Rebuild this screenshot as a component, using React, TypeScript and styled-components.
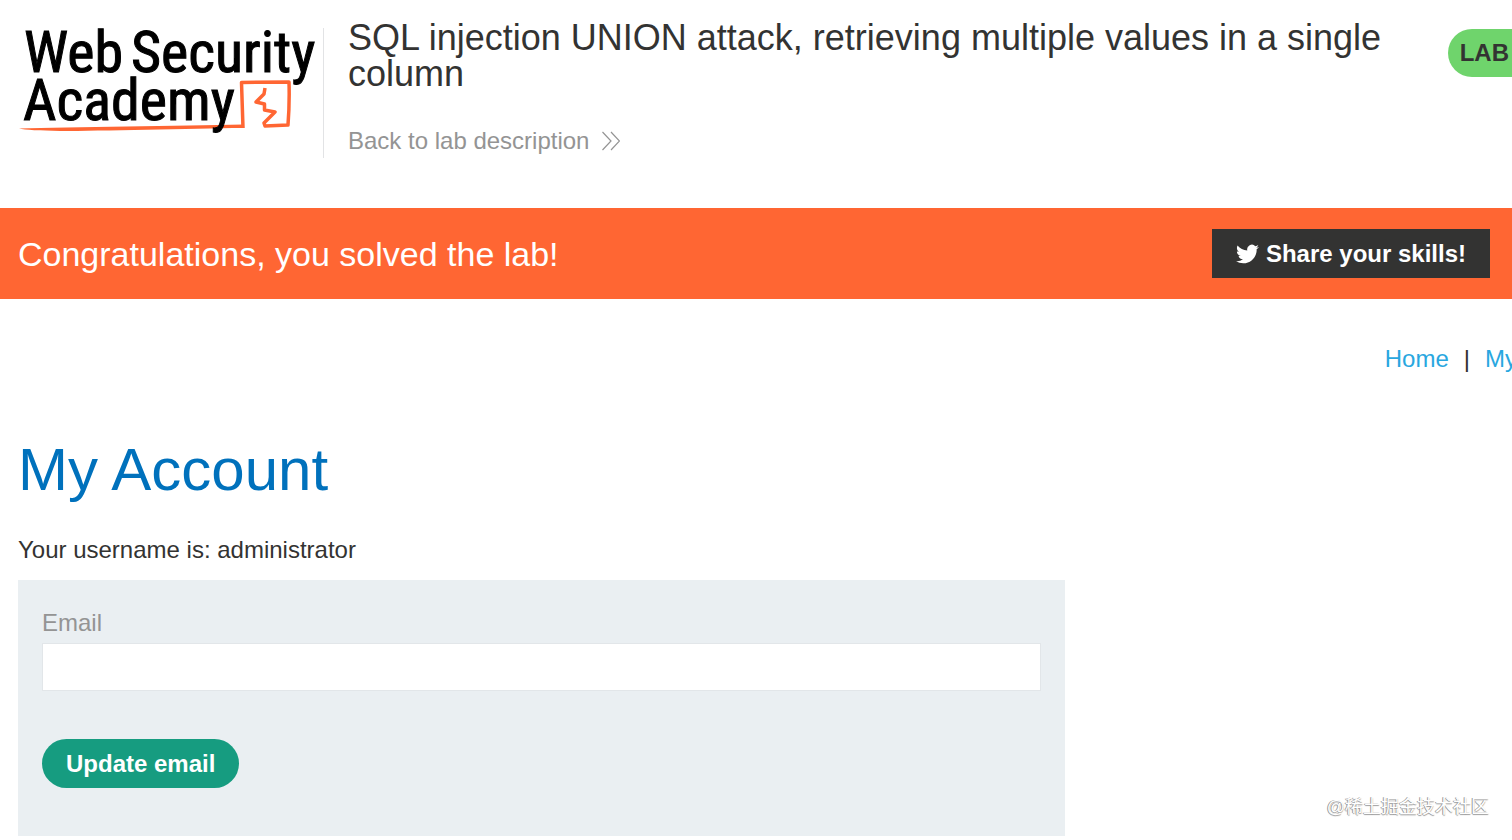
import React from "react";
import styled, { createGlobalStyle } from "styled-components";

const GlobalStyle = createGlobalStyle`
  *, *::before, *::after { box-sizing: border-box; }
  body {
    margin: 0;
    overflow-x: hidden;
    background: #fff;
    color: #333332;
    font-family: "Liberation Sans", Arial, sans-serif;
    font-size: 24px;
    line-height: 28px;
  }
  h1, h2, p { margin: 0; font-weight: 400; }
  a { text-decoration: none; }
`;

const Header = styled.header`
  display: flex;
  align-items: flex-start;
  padding: 20px 0 50px 18px;
`;

const LogoLink = styled.a`
  flex: none;
  display: block;
  height: 130px;
  margin-top: 8px;
  border-right: 1px solid #e2e3e5;
`;

const LogoSvg = styled.svg`
  display: block;
  overflow: visible;
`;

const LogoText = styled.text`
  font-family: "Roboto Condensed", "Liberation Sans Narrow", Roboto, sans-serif;
  font-size: 58px;
  font-weight: 400;
  fill: #000;
  stroke: #000;
  stroke-width: 1px;
`;

const TitleBlock = styled.div`
  flex: 1;
  min-width: 0;
  padding: 0 56px 0 24px;
`;

const Title = styled.h2`
  font-size: 36px;
  line-height: 36px;
`;

const BackLink = styled.a`
  display: inline-flex;
  align-items: center;
  gap: 13px;
  margin-top: 35px;
  color: #949494;
`;

const Status = styled.p`
  flex: none;
  margin-top: 9px;
  padding: 0 3px 0 12px;
  border-radius: 24px 0 0 24px;
  background: #6fd46c;
  font-weight: 700;
  line-height: 48px;
`;

const Banner = styled.section`
  display: flex;
  align-items: center;
  justify-content: space-between;
  padding: 21px 22px 21px 18px;
  background: #ff6633;
  color: #fff;
`;

const BannerText = styled.p`
  font-size: 34px;
  line-height: 40px;
`;

const ShareButton = styled.button`
  display: flex;
  align-items: center;
  gap: 7px;
  height: 49px;
  padding: 0 24px;
  border: 0;
  background: #333332;
  color: #fff;
  font: inherit;
  font-weight: 700;
`;

const Nav = styled.nav`
  display: flex;
  justify-content: flex-end;
  gap: 15px;
  margin: 46px -5px 0 0;
`;

const NavLink = styled.a`
  color: #29a7df;
`;

const Main = styled.main`
  padding: 0 18px;
`;

const PageTitle = styled.h1`
  margin-top: 63px;
  color: #0071bc;
  font-size: 60px;
  line-height: 68px;
`;

const Username = styled.p`
  margin-top: 32px;
`;

const Form = styled.form`
  display: flex;
  flex-direction: column;
  align-items: flex-start;
  max-width: 1047px;
  margin-top: 16px;
  padding: 29px 24px 48px;
  background: #eaeff2;
`;

const Label = styled.label`
  color: #949494;
`;

const Input = styled.input`
  width: 100%;
  height: 48px;
  margin-top: 6px;
  padding: 0 12px;
  border: 1px solid #e2e6e9;
  background: #fff;
  font: inherit;
`;

const SubmitButton = styled.button`
  height: 49px;
  margin-top: 48px;
  padding: 0 24px;
  border: 0;
  border-radius: 25px;
  background: #169c80;
  color: #fff;
  font: inherit;
  font-weight: 700;
`;

const Watermark = styled.p`
  position: absolute;
  right: 23px;
  top: 795px;
  color: #fff;
  font-family: "Liberation Sans", "Noto Sans CJK SC", sans-serif;
  font-size: 18px;
  line-height: 24px;
  text-shadow: -1px 0 0 #999, 0 1px 1px #999;
`;

function Logo() {
  return (
    <LogoSvg width="305" height="110" viewBox="18 28 305 110" role="img" aria-label="Web Security Academy">
      <path fill="#ff6633" d="M19 128.500C70 127 180 126 243 124.500L243 128C190 128.500 100 131 60 131C40 130.500 25 130 19 128.500Z" />
      <path
        fill="none"
        stroke="#ff6633"
        strokeWidth="3.500"
        strokeLinejoin="round"
        d="M243 128L241.500 82.500L289 82C289.500 98 289 112 288 125L265 126L264 123L275 112L264.500 110L264.500 104L256 102L264 94L265 88"
      />
      <LogoText x="24" y="72">Web</LogoText>
      <LogoText x="131" y="72">Security</LogoText>
      <LogoText x="23" y="120">Academy</LogoText>
    </LogoSvg>
  );
}

export default function App() {
  return (
    <>
      <GlobalStyle />
      <Header>
        <LogoLink href="#academy"><Logo /></LogoLink>
        <TitleBlock>
          <Title>SQL injection UNION attack, retrieving multiple values in a single column</Title>
          <BackLink href="#description">
            Back to lab description
            <svg width="18" height="20" viewBox="0 0 18 20" fill="none" stroke="#949494" strokeWidth="1.200" aria-hidden="true">
              <path d="M0.500 1L9 10L0.500 19M9 1L17.500 10L9 19" />
            </svg>
          </BackLink>
        </TitleBlock>
        <Status>LAB</Status>
      </Header>
      <Banner>
        <BannerText>Congratulations, you solved the lab!</BannerText>
        <ShareButton type="button">
          <svg width="23" height="24" viewBox="0 0 24 24" fill="#fff" aria-hidden="true">
            <path d="M23.950 4.570a10 10 0 0 1-2.820.770 4.960 4.960 0 0 0 2.160-2.720c-.950.550-2 .950-3.130 1.180a4.920 4.920 0 0 0-8.380 4.480C7.690 8.090 4.070 6.130 1.640 3.160a4.820 4.820 0 0 0-.670 2.480c0 1.710.870 3.210 2.190 4.100a4.900 4.900 0 0 1-2.230-.620v.060a4.920 4.920 0 0 0 3.950 4.830 5 5 0 0 1-2.210.080 4.940 4.940 0 0 0 4.600 3.420A9.870 9.870 0 0 1 0 19.540a13.990 13.990 0 0 0 7.550 2.210c9.050 0 14-7.500 14-13.980 0-.210 0-.420-.020-.630a9.940 9.940 0 0 0 2.420-2.570z" />
          </svg>
          Share your skills!
        </ShareButton>
      </Banner>
      <Nav>
        <NavLink href="#home">Home</NavLink>
        <span>|</span>
        <NavLink href="#account">My</NavLink>
      </Nav>
      <Main>
        <PageTitle>My Account</PageTitle>
        <Username>Your username is: administrator</Username>
        <Form>
          <Label htmlFor="email">Email</Label>
          <Input id="email" type="email" />
          <SubmitButton type="button">Update email</SubmitButton>
        </Form>
      </Main>
      <Watermark>@稀土掘金技术社区</Watermark>
    </>
  );
}
